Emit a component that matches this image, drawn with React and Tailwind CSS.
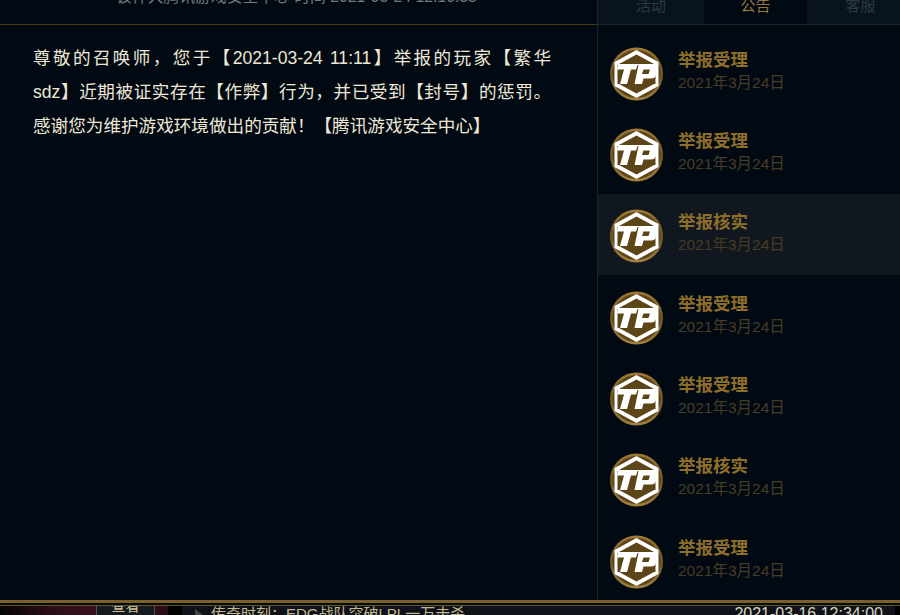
const font = { fontFamily: '"Liberation Sans", "Noto Sans CJK SC", sans-serif' }

const notices = [
  { title: "举报受理" },
  { title: "举报受理" },
  { title: "举报核实", active: true },
  { title: "举报受理" },
  { title: "举报受理" },
  { title: "举报核实" },
  { title: "举报受理" },
]

function TpBadge() {
  return (
    <svg width="54" height="54" viewBox="0 0 54 54" className="shrink-0 mt-[3px]">
      <defs>
        <linearGradient id="ring" x1="0" y1="0" x2="0" y2="1">
          <stop offset="0" stopColor="#a07a35" />
          <stop offset="0.5" stopColor="#6f5424" />
          <stop offset="1" stopColor="#a58240" />
        </linearGradient>
      </defs>
      <circle cx="26.5" cy="27" r="26.5" fill="url(#ring)" />
      <circle cx="26.5" cy="27" r="24" fill="#5c4517" />
      <path d="M26.5 3 L48.5 15 V39 L26.5 51 L4.5 39 V15 Z" fill="#ffffff" />
      <path d="M26.5 7.5 L44 17 H9 Z" fill="#5c4517" />
      <path d="M9 37 H44 L26.5 46.5 Z" fill="#5c4517" />
      <path d="M7.5 18 H45.5 V37 H7.5 Z" fill="#5c4517" />
      <path d="M8 18 H27.5 L26 22.5 H21 L17 37 H10 L14 22.5 H7 Z" fill="#ffffff" />
      <path d="M28.5 18 H46 Q48 18 47.5 22 L46 28 Q45 31.5 41 31.5 H33.5 L32 37 H24.5 Z M33.5 22.5 L32 27 H38.5 L40 22.5 Z" fill="#ffffff" fillRule="evenodd" />
    </svg>
  )
}

function NoticeRow({ title, active }) {
  return (
    <div className={`h-[81.33px] flex items-center pl-[12px] gap-[14px] ${active ? "bg-[#10171f]" : ""}`}>
      <TpBadge />
      <div className="flex flex-col -mt-[3px]">
        <span className="text-[17.5px] leading-[24px] font-bold text-[#8f6e2a]">{title}</span>
        <span className="text-[15.5px] leading-[22px] text-[#473c24]">2021年3月24日</span>
      </div>
    </div>
  )
}

export default function App() {
  return (
    <div style={font} className="w-[900px] h-[615px] overflow-hidden flex flex-col bg-[#010a13]">
      <div className="flex-1 min-h-0 flex">
        <div className="w-[597px] flex flex-col">
          <div className="h-[25px] border-b border-[#4a3a18] flex justify-center items-end overflow-hidden">
            <span className="text-[15.8px] leading-[20px] mb-[17px] text-[#77777a] whitespace-nowrap -translate-x-[2px]">该件大腾讯游戏安全中心 时间 2021-03-24 12:10:33</span>
          </div>
          <p className="pl-[33px] pr-[46px] pt-[16px] text-[17.6px] leading-[34px] text-[#efe7d6]">
            <span className="block [text-align-last:justify]">尊敬的召唤师，您于【2021-03-24 11:11】举报的玩家【繁华</span>
            <span className="block [text-align-last:justify]">sdz】近期被证实存在【作弊】行为，并已受到【封号】的惩罚。</span>
            <span className="block">感谢您为维护游戏环境做出的贡献！【腾讯游戏安全中心】</span>
          </p>
        </div>
        <div className="w-[303px] border-l border-[#1c232b]">
          <div className="h-[25px] flex border-b border-[#1c242c] text-[15px] leading-[20px]">
            {[
              { label: "活动", on: false, w: "w-[106px]" },
              { label: "公告", on: true, w: "w-[103px]" },
              { label: "客服", on: false, w: "flex-1 pl-[14px]" },
            ].map((t) => (
              <div
                key={t.label}
                className={`${t.w} flex justify-center items-end overflow-hidden pb-[8px] ${t.on ? "bg-[#010a13] text-[#96763a]" : "bg-[#08131f] text-[#2c3a46]"}`}
              >
                {t.label}
              </div>
            ))}
          </div>
          <div className="pt-[6.5px]">
            {notices.map((n, i) => (
              <NoticeRow key={i} title={n.title} active={n.active} />
            ))}
          </div>
        </div>
      </div>
      <div className="h-[15px] shrink-0 flex flex-col bg-[#010a13]">
        <div className="h-[3px] bg-[#7d5f2a]" />
        <div className="h-[2px] bg-[#010a13]" />
        <div className="h-[1px] bg-[#6b5326]" />
        <div className="flex-1 flex overflow-hidden">
          <div className="w-[96px] bg-gradient-to-r from-[#050505] via-[#2a0d16] to-[#3a111c]" />
          <div className="w-[59px] bg-[#151a1e] border-x border-[#5a5240] flex justify-center text-[14px] leading-[14px] text-[#d0c6a0] overflow-hidden">
            <span className="-mt-[7px]">查看</span>
          </div>
          <div className="w-[13px] bg-[#2a0d16]" />
          <div className="w-[14px] bg-black" />
          <div className="flex-1 bg-[#0f1319] flex overflow-hidden">
            <span className="w-[8px] ml-[13px] h-full flex items-start shrink-0">
              <span className="mt-[3px] w-0 h-0 border-y-[6px] border-y-transparent border-l-[8px] border-l-[#444]" />
            </span>
            <span className="ml-[8px] text-[15px] leading-[16px] text-[#c3b88e]">传奇时刻：EDG战队突破LPL一万击杀</span>
            <span className="ml-auto mr-[12px] text-[16px] leading-[16px] text-[#d8d3c0]">2021-03-16 12:34:00</span>
          </div>
          <div className="w-[5px] bg-black" />
        </div>
      </div>
    </div>
  )
}
